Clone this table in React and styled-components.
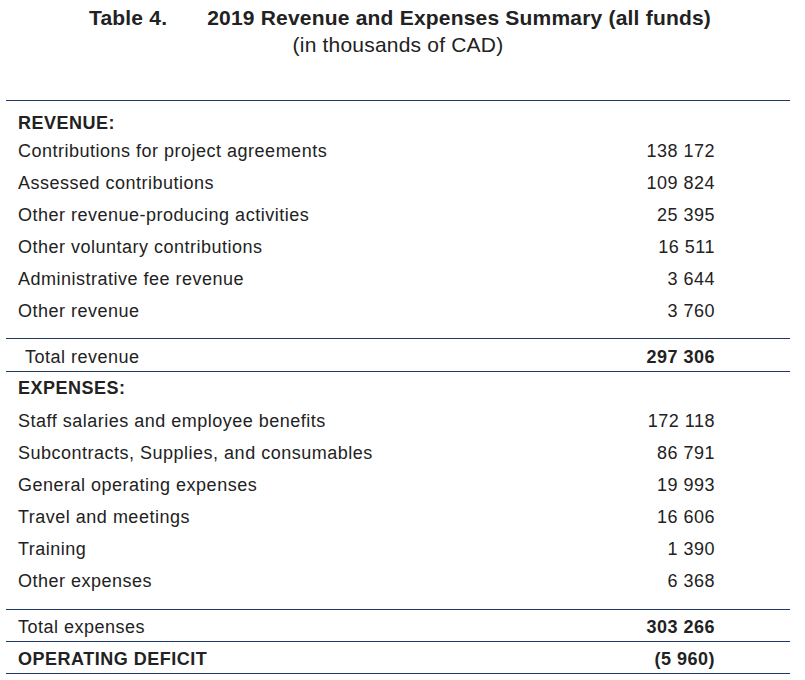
import React from "react";
import styled, { createGlobalStyle } from "styled-components";

const revenue = [
  ["Contributions for project agreements", "138 172"],
  ["Assessed contributions", "109 824"],
  ["Other revenue-producing activities", "25 395"],
  ["Other voluntary contributions", "16 511"],
  ["Administrative fee revenue", "3 644"],
  ["Other revenue", "3 760"],
];

const expenses = [
  ["Staff salaries and employee benefits", "172 118"],
  ["Subcontracts, Supplies, and consumables", "86 791"],
  ["General operating expenses", "19 993"],
  ["Travel and meetings", "16 606"],
  ["Training", "1 390"],
  ["Other expenses", "6 368"],
];

function App() {
  return (
    <>
      <GlobalStyle />
      <Page>
        <Caption>
          <CaptionLine>
            <span>Table 4.</span>
            <span>2019 Revenue and Expenses Summary (all funds)</span>
          </CaptionLine>
          <Sub>(in thousands of CAD)</Sub>
        </Caption>
        <Table>
          <Section $top={11} $bottom={11}>
            <Heading $h={23}>REVENUE:</Heading>
            {revenue.map(([label, value]) => (
              <Row key={label}>
                <span>{label}</span>
                <Amount>{value}</Amount>
              </Row>
            ))}
          </Section>
          <TotalRow $h={34} $indent>
            <span>Total revenue</span>
            <Amount $bold>297 306</Amount>
          </TotalRow>
          <Section $top={0} $bottom={12}>
            <Heading $h={33}>EXPENSES:</Heading>
            {expenses.map(([label, value]) => (
              <Row key={label}>
                <span>{label}</span>
                <Amount>{value}</Amount>
              </Row>
            ))}
          </Section>
          <TotalRow $h={33}>
            <span>Total expenses</span>
            <Amount $bold>303 266</Amount>
          </TotalRow>
          <TotalRow $h={32}>
            <Strong>OPERATING DEFICIT</Strong>
            <Amount $bold>(5 960)</Amount>
          </TotalRow>
        </Table>
      </Page>
    </>
  );
}

const GlobalStyle = createGlobalStyle`
  body {
    margin: 0;
    background: #fff;
    font-family: "Liberation Sans", Arial, sans-serif;
    color: #222;
  }
`;

const Page = styled.div`
  width: 805px;
  height: 680px;
  padding: 5px 15px 0 6px;
  box-sizing: border-box;
`;

const Caption = styled.div`
  text-align: center;
  height: 95px;
  letter-spacing: 0.2px;
`;

const CaptionLine = styled.div`
  display: flex;
  justify-content: center;
  gap: 40px;
  font-weight: bold;
  font-size: 21px;
  line-height: 26px;
  padding-left: 4px;
`;

const Sub = styled.div`
  font-size: 21px;
  line-height: 28px;
`;

const Table = styled.div`
  border-top: 1px solid #1f3864;
  font-size: 18px;
  letter-spacing: 0.5px;
`;

const Section = styled.div`
  padding: ${(p) => p.$top}px 0 ${(p) => p.$bottom}px;
`;

const Heading = styled.div`
  height: ${(p) => p.$h}px;
  display: flex;
  align-items: center;
  padding-left: 12px;
  font-weight: bold;
`;

const Row = styled.div`
  height: 32px;
  display: flex;
  align-items: center;
  justify-content: space-between;
  padding: 0 75px 0 12px;
`;

const TotalRow = styled(Row)`
  box-sizing: border-box;
  height: ${(p) => p.$h}px;
  border-top: 1px solid #1f3864;
  border-bottom: 1px solid #1f3864;
  padding-left: ${(p) => (p.$indent ? 19 : 12)}px;
  padding-top: 4px;
  & + & {
    border-top: none;
  }
`;

const Amount = styled.span`
  font-weight: ${(p) => (p.$bold ? "bold" : "normal")};
`;

const Strong = styled.span`
  font-weight: bold;
`;

export default App;
